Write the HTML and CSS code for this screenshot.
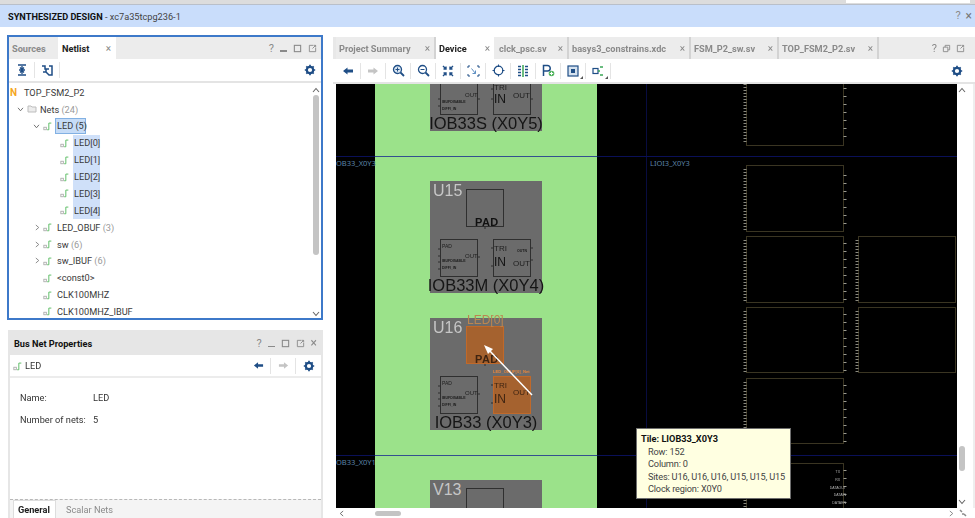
FILE: index.html
```html
<!DOCTYPE html>
<html lang="en">
<head>
<meta charset="utf-8">
<title>Synthesized Design</title>
<link rel="stylesheet" href="styles.css">
</head>
<body>
<svg class="defs" width="0" height="0" aria-hidden="true">
  <defs>
    <symbol id="net" viewBox="0 0 12 12"><rect x="1" y="7.5" width="3" height="3" fill="none" stroke="#a8a8a8"/><path d="M5 10.5H7V2.5H10" fill="none" stroke="#62bf6a" stroke-width="1.2"/></symbol>
    <symbol id="gear" viewBox="0 0 12 12"><circle cx="6" cy="6" r="3.2" fill="none" stroke="#1f4e86" stroke-width="2.2"/><path d="M6 .8V3M6 9V11.2M.8 6H3M9 6H11.2M2.3 2.3L3.9 3.9M8.1 8.1L9.7 9.7M2.3 9.7L3.9 8.1M8.1 3.9L9.7 2.3" stroke="#1f4e86" stroke-width="1.7"/></symbol>
    <symbol id="back" viewBox="0 0 12 12"><path d="M1 6L5.5 2.5V4.6H11V7.4H5.5V9.5Z" fill="#1f4e86"/></symbol>
    <symbol id="fwd" viewBox="0 0 12 12"><path d="M11 6L6.5 2.5V4.6H1V7.4H6.5V9.5Z" fill="#c4c4c4"/></symbol>
    <symbol id="up" viewBox="0 0 8 6"><path d="M1 5L4 1.5L7 5" fill="none" stroke="#666" stroke-width="1.1"/></symbol>
    <symbol id="down" viewBox="0 0 8 6"><path d="M1 1L4 4.5L7 1" fill="none" stroke="#666" stroke-width="1.1"/></symbol>
    <symbol id="right" viewBox="0 0 6 8"><path d="M1 1L4.5 4L1 7" fill="none" stroke="#808080" stroke-width="1.1"/></symbol>
    <symbol id="left" viewBox="0 0 6 8"><path d="M5 1L1.5 4L5 7" fill="none" stroke="#666" stroke-width="1.1"/></symbol>
    <symbol id="restore" viewBox="0 0 10 10"><path d="M1.5 3.5H6.5V8.5H1.5ZM3.5 3.5V1.5H8.5V6.5H6.5" fill="none" stroke="#8a8a8a"/></symbol>
    <symbol id="max" viewBox="0 0 10 10"><rect x="1.5" y="1.5" width="7" height="7" fill="none" stroke="#8a8a8a" stroke-width="1.2"/></symbol>
    <symbol id="float" viewBox="0 0 10 10"><path d="M8.5 4V8.5H1.5V1.5H6M5 5L8.5 1.5M6.5 1.5H8.5V3.5" fill="none" stroke="#8a8a8a"/></symbol>
  </defs>
</svg>

<div class="topstrip"><div class="topstrip-box"></div></div>
<header class="banner">
  <div class="banner-title"><b>SYNTHESIZED DESIGN</b> - xc7a35tcpg236-1</div>
  <div class="banner-actions"><span class="help">?</span><span class="close">×</span></div>
</header>

<main class="workspace">
  <div class="leftcol">
    <section class="netlist">
      <div class="tabs">
        <div class="tab tab-sources">Sources</div>
        <div class="tab tab-active tab-netlist">Netlist<span class="x">×</span></div>
        <div class="win-actions">
          <span class="help">?</span><span class="min"></span>
          <svg class="wi"><use href="#max"/></svg><svg class="wi"><use href="#float"/></svg>
        </div>
      </div>
      <div class="toolbar">
        <div class="tb">
          <svg width="12" height="12" viewBox="0 0 12 12"><path d="M2 1H10M2 11H10M6 2V5M4 3.5L6 5.5L8 3.5M6 10V7M4 8.5L6 6.5L8 8.5M3 6H9" fill="none" stroke="#1f4e86" stroke-width="1.3"/></svg>
        </div>
        <div class="tb">
          <svg width="12" height="12" viewBox="0 0 12 12"><path d="M1 2L4 2V5H8M8 2L11 2V11H8L5 8V5M2 8H5" fill="none" stroke="#1f4e86" stroke-width="1.5"/></svg>
        </div>
        <svg class="gear" width="12" height="12"><use href="#gear"/></svg>
      </div>
      <div class="treewrap">
        <div class="tree">
          <div class="row"><span class="n-icon">N</span><span class="lbl lbl-root">TOP_FSM2_P2</span></div>
          <div class="row l1"><svg class="chev-d"><use href="#down"/></svg>
            <svg class="ic" width="10" height="10" viewBox="0 0 10 10"><path d="M1 2H4L5 3H9V8H1Z" fill="#ececec" stroke="#bdbdbd"/></svg>
            <span class="lbl">Nets <i>(24)</i></span></div>
          <div class="row l2"><svg class="chev-d"><use href="#down"/></svg><svg class="ic"><use href="#net"/></svg><span class="lbl sel-main">LED (5)</span></div>
          <div class="row l3"><svg class="ic"><use href="#net"/></svg><span class="lbl sel">LED[0]</span></div>
          <div class="row l3"><svg class="ic"><use href="#net"/></svg><span class="lbl sel">LED[1]</span></div>
          <div class="row l3"><svg class="ic"><use href="#net"/></svg><span class="lbl sel">LED[2]</span></div>
          <div class="row l3"><svg class="ic"><use href="#net"/></svg><span class="lbl sel">LED[3]</span></div>
          <div class="row l3"><svg class="ic"><use href="#net"/></svg><span class="lbl sel">LED[4]</span></div>
          <div class="row l2"><svg class="chev-r"><use href="#right"/></svg><svg class="ic"><use href="#net"/></svg><span class="lbl">LED_OBUF <i>(3)</i></span></div>
          <div class="row l2"><svg class="chev-r"><use href="#right"/></svg><svg class="ic"><use href="#net"/></svg><span class="lbl">sw <i>(6)</i></span></div>
          <div class="row l2"><svg class="chev-r"><use href="#right"/></svg><svg class="ic"><use href="#net"/></svg><span class="lbl">sw_IBUF <i>(6)</i></span></div>
          <div class="row l2b"><svg class="ic"><use href="#net"/></svg><span class="lbl">&lt;const0&gt;</span></div>
          <div class="row l2b"><svg class="ic"><use href="#net"/></svg><span class="lbl">CLK100MHZ</span></div>
          <div class="row l2b"><svg class="ic"><use href="#net"/></svg><span class="lbl">CLK100MHZ_IBUF</span></div>
        </div>
        <div class="vscroll">
          <svg class="arrow"><use href="#up"/></svg>
          <div class="vthumb"></div>
          <svg class="arrow"><use href="#down"/></svg>
        </div>
      </div>
    </section>

    <section class="props">
      <div class="props-head"><b>Bus Net Properties</b>
        <div class="win-actions">
          <span class="help">?</span><span class="min"></span>
          <svg class="wi"><use href="#max"/></svg><svg class="wi"><use href="#float"/></svg><span class="close-sm">×</span>
        </div>
      </div>
      <div class="props-bar">
        <svg class="ic"><use href="#net"/></svg><span class="props-name">LED</span>
        <div class="props-btns">
          <div class="pb"><svg width="11" height="11"><use href="#back"/></svg></div>
          <div class="pb"><svg width="11" height="11"><use href="#fwd"/></svg></div>
          <div class="pb pb-last"><svg width="12" height="12"><use href="#gear"/></svg></div>
        </div>
      </div>
      <div class="props-body">
        <div class="prop"><span class="k">Name:</span><span>LED</span></div>
        <div class="prop"><span class="k">Number of nets:</span><span>5</span></div>
      </div>
      <div class="props-tabs"><div class="ptab ptab-on">General</div><div class="ptab">Scalar Nets</div></div>
    </section>
  </div>

  <section class="device">
    <div class="tabs tabs-r">
      <div class="tab rt rt1">Project Summary<span class="x">×</span></div>
      <div class="tab tab-active rt rt2">Device<span class="x">×</span></div>
      <div class="tab rt rt3">clck_psc.sv<span class="x">×</span></div>
      <div class="tab rt rt4">basys3_constrains.xdc<span class="x">×</span></div>
      <div class="tab rt rt5">FSM_P2_sw.sv<span class="x">×</span></div>
      <div class="tab rt rt6">TOP_FSM2_P2.sv<span class="x">×</span></div>
      <div class="win-actions win-r">
        <span class="help">?</span>
        <svg class="wi"><use href="#restore"/></svg><svg class="wi"><use href="#float"/></svg>
      </div>
    </div>
    <div class="toolbar toolbar-r">
      <div class="tb"><svg width="12" height="12"><use href="#back"/></svg></div>
      <div class="tb"><svg width="12" height="12"><use href="#fwd"/></svg></div>
      <div class="tb"><svg width="13" height="13" viewBox="0 0 13 13"><circle cx="5.5" cy="5.5" r="4" fill="#dbe7f3" stroke="#1f4e86" stroke-width="1.3"/><path d="M8.5 8.5L12 12" stroke="#1f4e86" stroke-width="1.8"/><path d="M3.5 5.5H7.5M5.5 3.5V7.5" stroke="#1f4e86"/></svg></div>
      <div class="tb"><svg width="13" height="13" viewBox="0 0 13 13"><circle cx="5.5" cy="5.5" r="4" fill="none" stroke="#1f4e86" stroke-width="1.3"/><path d="M8.5 8.5L12 12" stroke="#1f4e86" stroke-width="1.8"/><path d="M3.5 5.5H7.5" stroke="#1f4e86"/></svg></div>
      <div class="tb"><svg width="12" height="12" viewBox="0 0 12 12"><path d="M1 1L4 4M4 1.5V4H1.5M11 1L8 4M8 1.5V4H10.5M1 11L4 8M4 10.5V8H1.5M11 11L8 8M8 10.5V8H10.5" fill="none" stroke="#1f4e86" stroke-width="1.4"/></svg></div>
      <div class="tb"><svg width="13" height="12" viewBox="0 0 13 12"><path d="M1 3V1H3M10 1H12V3M1 9V11H3M10 11H12V9" fill="none" stroke="#1f4e86"/><path d="M4.500 3.500L8.500 8.500M8.500 8.500V5.500M8.500 8.500H5.500" fill="none" stroke="#5d8fc2"/></svg></div>
      <div class="tb"><svg width="13" height="13" viewBox="0 0 13 13"><circle cx="6.500" cy="6.500" r="4.300" fill="none" stroke="#1f4e86" stroke-width="1.200"/><path d="M6.500 0.500V3M6.500 10V12.500M0.500 6.500H3M10 6.500H12.500" stroke="#1f4e86"/></svg></div>
      <div class="tb"><svg width="12" height="12" viewBox="0 0 12 12"><path d="M1 1.500H4M1 4.500H4M1 7.500H4M1 10.500H4M8 1.500H11M8 4.500H11M8 7.500H11M8 10.500H11" stroke="#1f4e86" stroke-width="1.500"/><path d="M6 0V12" stroke="#3aa655" stroke-width="1.500"/></svg></div>
      <div class="tb"><svg width="14" height="13" viewBox="0 0 14 13"><path d="M2.500 12V1.500H6.500A2.500 2.500 0 0 1 6.500 7H2.500" fill="none" stroke="#1f4e86" stroke-width="1.500"/><circle cx="10.500" cy="9.500" r="2.800" fill="#4fb35c"/><path d="M8.800 9.500H12.200M10.500 7.800V11.200" stroke="#fff"/></svg></div>
      <div class="tb tb-corner"><svg width="12" height="12" viewBox="0 0 12 12"><rect x="1" y="1" width="10" height="10" fill="#d5e2ef" stroke="#1f4e86" stroke-width="1.200"/><rect x="4" y="4" width="4" height="4" fill="#1f4e86"/></svg></div>
      <div class="tb tb-corner"><svg width="13" height="12" viewBox="0 0 13 12"><rect x="1" y="3.500" width="5" height="5" fill="none" stroke="#1f4e86" stroke-width="1.200"/><path d="M8 2H11M8 10H11M6 6H8" stroke="#3aa655" stroke-width="1.500"/></svg></div>
      <svg class="gear gear-r" width="12" height="12"><use href="#gear"/></svg>
    </div>
    <div class="device-body">
      <div class="canvas">
        <svg class="canvas-svg" width="621" height="424" viewBox="336 84 621 424">
          <rect x="336" y="84" width="621" height="424" fill="#000"/>
          <rect x="375" y="84" width="222" height="424" fill="#9be28a"/>
          <path d="M646.500 84V508" stroke="#080c40"/>
          <path d="M336 156.500H957M336 455.500H957" stroke="#0a1058"/>
          <path d="M375 156.500H597M375 455.500H597" stroke="#33508f"/>
          <g class="tilelabel">
            <text x="336" y="166">OB33_X0Y3</text>
            <text x="650" y="166">LIOI3_X0Y3</text>
            <text x="336" y="465">OB33_X0Y1</text>
          </g>

          <!-- site X0Y5 -->
          <g transform="translate(430 19)">
            <rect width="112" height="112" fill="#6b6b6b"/>
            <g class="bel"><rect x="10.500" y="58.500" width="37" height="37"/><rect x="63.500" y="58.500" width="37" height="37"/></g>
            <path class="pins" d="M8 87H10M8 80H10M47 80H50M61 70H63M61 80H63M100 80H103"/>
            <text class="t4b" x="12" y="84">IBUFDISABLE</text><text class="t4b" x="12" y="91">DIFFI_IN</text>
            <text class="t6" x="35" y="78">OUT</text><text class="t8" x="64" y="71">TRI</text><text class="t12" x="64" y="84">IN</text><text class="t8" x="83" y="79">OUT</text>
            <text class="sitelabel" x="56" y="109.500">IOB33S (X0Y5)</text>
          </g>

          <!-- site X0Y4 -->
          <g transform="translate(430 181)">
            <rect width="112" height="112" fill="#6b6b6b"/>
            <text class="sitename" x="3" y="15">U15</text>
            <g class="bel"><rect x="36.500" y="8.500" width="37" height="37"/><rect x="10.500" y="58.500" width="37" height="37"/><rect x="63.500" y="58.500" width="37" height="37"/></g>
            <path class="pins" d="M55 46V48M8 68H10M8 75H10M8 81H10M8 88H10M47 76H50M61 67H63M61 85H63M100 67H103M100 79H103"/>
            <text class="padname" x="45" y="45">PAD</text>
            <text class="t5" x="12" y="67">PAD</text><text class="t4b" x="12" y="81">IBUFDISABLE</text><text class="t4b" x="12" y="88">DIFFI_IN</text>
            <text class="t6" x="35" y="77">OUT</text><text class="t8" x="64" y="70">TRI</text><text class="t12" x="64" y="85">IN</text><text class="t8" x="83" y="85">OUT</text><text class="t4b" x="87" y="71">OUTN</text>
            <text class="sitelabel" x="56" y="109.500">IOB33M (X0Y4)</text>
          </g>

          <!-- site X0Y3 -->
          <g transform="translate(430 318)">
            <rect width="112" height="112" fill="#6b6b6b"/>
            <text class="sitename" x="3" y="15">U16</text>
            <g class="bel"><rect x="10.500" y="58.500" width="37" height="37"/></g>
            <rect class="hl" x="36.500" y="8.500" width="37" height="37"/>
            <rect class="hl" x="63.500" y="58.500" width="37" height="37"/>
            <path class="pins" d="M55 46V48M8 68H10M8 75H10M8 81H10M8 88H10M47 76H50M61 67H63M61 85H63"/>
            <text class="padname padname-hl" x="45" y="45">PAD</text>
            <text class="t5" x="12" y="67">PAD</text><text class="t4b" x="12" y="81">IBUFDISABLE</text><text class="t4b" x="12" y="88">DIFFI_IN</text>
            <text class="t6" x="35" y="77">OUT</text><text class="t8 dim" x="64" y="70">TRI</text><text class="t12 dim" x="64" y="85">IN</text><text class="t8 dim" x="83" y="77">OUT</text>
            <text class="ledname" x="37" y="6">LED[0]</text>
            <text class="obufname" x="63" y="54.500">LED_OBUF[0]_Net</text>
            <text class="sitelabel" x="56" y="109.500">IOB33 (X0Y3)</text>
            <path d="M102 77L58 31" stroke="#fff" stroke-width="1.500"/>
            <path d="M54 27L63 31L58 36Z" fill="#fff"/>
          </g>

          <!-- site X0Y1 -->
          <g transform="translate(430 480)">
            <rect width="112" height="112" fill="#6b6b6b"/>
            <text class="sitename" x="3" y="15">V13</text>
            <g class="bel"><rect x="36.500" y="8.500" width="37" height="37"/></g>
          </g>

          <!-- CLB columns -->
          <g class="clb">
            <rect x="746.500" y="60.500" width="97" height="85"/>
            <rect x="746.500" y="165.500" width="97" height="66"/>
            <rect x="746.500" y="236.500" width="97" height="66"/>
            <rect x="746.500" y="307.500" width="97" height="65"/>
            <rect x="746.500" y="378.500" width="97" height="65"/>
            <rect x="746.500" y="463.500" width="97" height="65"/>
            <rect x="858.500" y="236.500" width="97" height="66"/>
            <rect x="858.500" y="307.500" width="97" height="65"/>
          </g>
          <path class="ticks-l" d="M745 84V144M745 169V230M745 240V301M745 311V372M745 382V442M745 467V508M857 240V301M857 311V372"/>
          <path class="ticks-r" d="M845 88V144M845 175V230M845 243V301M845 314V372M845 385V442M845 470V508"/>
          <g class="tinytext"><text x="840" y="473" text-anchor="end">TX</text><text x="840" y="481" text-anchor="end">RX</text><text x="846" y="489" text-anchor="end">DATAOUT</text><text x="846" y="496" text-anchor="end">DATAIN</text><text x="846" y="504" text-anchor="end">DATAEN</text></g>
        </svg>
        <div class="tooltip">
          <div class="tip-title">Tile: LIOB33_X0Y3</div>
          <div class="tip-row">Row: 152</div>
          <div class="tip-row">Column: 0</div>
          <div class="tip-row">Sites: U16, U16, U16, U15, U15, U15</div>
          <div class="tip-row">Clock region: X0Y0</div>
        </div>
      </div>
      <div class="canvas-vs">
        <svg class="arrow"><use href="#up"/></svg>
        <div class="canvas-vthumb"></div>
        <svg class="arrow"><use href="#down"/></svg>
      </div>
    </div>
    <div class="canvas-hs">
      <svg class="harrow"><use href="#left"/></svg>
      <div class="canvas-hthumb"></div>
      <svg class="harrow harrow-r"><use href="#right"/></svg>
      <svg class="grip" width="8" height="8" viewBox="0 0 8 8"><path d="M1 1L3 3M5 5L7 7M3 5H5" stroke="#8a8a8a" stroke-width="1.500"/></svg>
    </div>
  </section>
</main>
</body>
</html>
```

FILE: styles.css
```css
* { box-sizing: border-box; }
html, body { margin: 0; padding: 0; }
body {
  width: 975px;
  height: 518px;
  overflow: hidden;
  background: #fff;
  font-family: Roboto, "Noto Sans", sans-serif;
  font-size: 9.2px;
  color: #333;
  display: flex;
  flex-direction: column;
  filter: blur(0.35px);
}
.defs { position: absolute; }

.topstrip { height: 5px; background: #dcdcdc; border-bottom: 1px solid #b9bfc9; display: flex; justify-content: flex-end; padding-right: 5px; }
.topstrip-box { width: 124px; height: 3px; background: #fff; }
.banner { height: 22px; background: #c9ddfb; display: flex; align-items: center; justify-content: space-between; padding: 0 3px 0 8px; color: #444; }
.banner b { color: #111; font-weight: 700; }
.banner-actions { display: flex; gap: 5px; color: #777; font-size: 12px; }

.workspace { flex: 1; min-height: 0; display: flex; padding: 8px 0 0 7px; gap: 10px; }
.leftcol { width: 316px; display: flex; flex-direction: column; gap: 10px; }

.netlist { height: 285px; border: 2px solid #3d79c9; display: flex; flex-direction: column; background: #fff; }
.tabs { height: 22px; display: flex; background: #ececec; align-items: stretch; flex-shrink: 0; }
.tab { display: flex; align-items: center; color: #8a8a8a; font-weight: 700; white-space: nowrap; }
.tab-active { background: #fff; color: #222; }
.tab-sources { width: 49px; padding-left: 3px; }
.tab-netlist { width: 58px; padding-left: 4px; }
.x { font-weight: 400; color: #888; font-size: 10px; }
.tab-netlist .x { margin-left: auto; margin-right: 5px; }
.win-actions { margin-left: auto; display: flex; align-items: center; gap: 6px; padding-right: 4px; color: #888; }
.help { font-size: 11px; color: #8a8a8a; }
.min { width: 7px; height: 1.500px; background: #8a8a8a; margin-top: 6px; }
.wi { width: 9px; height: 9px; }

.toolbar { height: 24px; display: flex; align-items: center; background: #fff; border-bottom: 2px solid #e4e4e4; padding-left: 1px; flex-shrink: 0; }
.tb { width: 25px; height: 16px; display: flex; align-items: center; justify-content: center; border-right: 1px solid #e4e4e4; position: relative; }
.tb-corner::after { content: ""; position: absolute; right: 2px; bottom: 0; border-left: 3px solid transparent; border-bottom: 3px solid #555; }
.gear { margin-left: auto; margin-right: 5px; }

.treewrap { flex: 1; min-height: 0; display: flex; }
.tree { flex: 1; padding-top: 1px; overflow: hidden; }
.row { height: 16.850px; display: flex; align-items: center; padding-left: 1px; color: #3a3a3a; white-space: nowrap; }
.row i { font-style: normal; color: #9a9a9a; }
.n-icon { color: #f5a623; font-weight: 700; font-size: 10px; width: 13px; margin-right: 1px; }
.ic { width: 10px; height: 10px; flex-shrink: 0; }
.chev-d { width: 7px; height: 5px; margin-right: 3px; }
.chev-r { width: 5px; height: 7px; margin: 0 3px 0 2px; }
.l1 { padding-left: 8px; }
.l1 .lbl { margin-left: 3px; }
.l2 { padding-left: 24px; }
.l2b { padding-left: 34px; }
.l2 .ic, .l2b .ic { margin-right: 4px; }
.l3 { padding-left: 51px; }
.l3 .ic { margin-right: 3px; }
.sel-main { background: #c6dcf7; border: 1px solid #82b1e3; padding: 0 1px; height: 16px; line-height: 14px; margin-left: -2px; width: 31px; }
.sel { background: #cfe0f9; height: 100%; display: flex; align-items: center; padding: 0 1px; width: 27px; }
.lbl { white-space: nowrap; }

.vscroll { width: 11px; display: flex; flex-direction: column; align-items: center; padding-top: 4px; background: #fff; }
.arrow { width: 8px; height: 6px; flex-shrink: 0; }
.vthumb { width: 6px; height: 160px; margin-top: 2px; background: #c4c4c4; border-radius: 3px; }
.vscroll .arrow:last-child { margin-top: auto; margin-bottom: 1px; }

.props { flex: 1; min-height: 0; display: flex; flex-direction: column; border: solid #e6e6e6; border-width: 0 2px; margin-left: 1px; }
.props-head { height: 25px; flex-shrink: 0; background: #e6e6e6; display: flex; align-items: center; padding: 2px 0 0 4px; color: #111; }
.close-sm { font-size: 12px; line-height: 9px; color: #8a8a8a; }
.props-bar { height: 23px; flex-shrink: 0; display: flex; align-items: center; padding-left: 3px; border-bottom: 2px solid #ececec; }
.props-name { margin-left: 2px; }
.props-btns { margin-left: auto; display: flex; }
.pb { width: 25px; height: 16px; display: flex; align-items: center; justify-content: center; border-right: 1px solid #e4e4e4; }
.pb-last { border-right: 0; }
.props-body { flex: 1; padding: 8px 0 0 10px; }
.prop { display: flex; height: 22px; align-items: center; }
.k { width: 73px; }
.props-tabs { height: 19px; flex-shrink: 0; background: #f4f4f4; border-top: 1px dashed #b8b8b8; display: flex; padding-left: 3px; gap: 9px; color: #8a8a8a; }
.ptab { display: flex; align-items: center; padding: 0 1px; }
.ptab-on { background: #fff; border: 1px solid #ddd; border-bottom: 0; padding: 0 4px; color: #222; font-weight: 700; width: 43px; }

.device { flex: 1; min-width: 0; display: flex; flex-direction: column; padding-top: 2px; background: #e8e8e8; background-clip: content-box; }
.tabs-r { border-left: 3px solid #e8e8e8; }
.rt { padding-left: 3px; border-right: 2px solid #d3d3d3; font-weight: 700; }
.rt1 { width: 100px; }
.rt2 { width: 58px; border-right: 0; }
.rt3 { width: 75px; padding-left: 5px; }
.rt4 { width: 122px; }
.rt5 { width: 88px; }
.rt6 { width: 100px; }
.rt .x { margin-left: auto; margin-right: 4px; }
.win-r { padding-right: 10px; gap: 5px; }
.toolbar-r { height: 25px; padding-left: 3px; }
.gear-r { margin-right: 12px; }

.device-body { height: 424px; display: flex; padding-left: 3px; background: #fff; }
.canvas { position: relative; width: 621px; height: 424px; background: #000; }
.canvas-svg { display: block; }
.canvas-vs { flex: 1; display: flex; flex-direction: column; align-items: center; padding: 3px 7px 3px 0; background: #fff; border-right: 2px solid #eee; }
.canvas-vthumb { width: 6px; height: 25px; background: #c4c4c4; border-radius: 3px; margin-top: auto; margin-bottom: 28px; }
.canvas-hs { flex: 1; min-height: 0; display: flex; align-items: center; padding-left: 6px; background: #fff; }
.harrow { width: 5px; height: 7px; flex-shrink: 0; }
.canvas-hthumb { width: 26px; height: 5px; border-radius: 3px; background: #c4c4c4; margin-left: 31px; }
.harrow-r { margin-left: auto; }
.grip { margin: 0 8px 0 5px; }

.bel rect { fill: none; stroke: #2f2f2f; }
.pins { stroke: #2f2f2f; fill: none; }
.hl { fill: #a5622f; stroke: #c0692a; }
.sitelabel { font: 16.500px "Liberation Sans", sans-serif; fill: #151515; text-anchor: middle; }
.sitename { font: 16px "Liberation Sans", sans-serif; fill: #c6c6c6; }
.padname { font: 700 11px "Liberation Sans", sans-serif; fill: #111; letter-spacing: .4px; }
.padname-hl { fill: #3f2411; }
.ledname { font: 12px "Liberation Sans", sans-serif; fill: #bb8650; }
.obufname { font: 700 4.200px "Liberation Sans", sans-serif; fill: #e8873e; }
.t4b { font: 700 3.500px "Liberation Sans", sans-serif; fill: #1c1c1c; }
.t5 { font: 5px "Liberation Sans", sans-serif; fill: #1c1c1c; }
.t6 { font: 6px "Liberation Sans", sans-serif; fill: #202020; }
.t8 { font: 8px "Liberation Sans", sans-serif; fill: #202020; }
.t12 { font: 12px "Liberation Sans", sans-serif; fill: #111; }
.dim { fill: #3e2412; }
.tilelabel text { font: 7.500px "Noto Sans", sans-serif; fill: #5c84a8; }
.clb rect { fill: none; stroke: #3a3522; }
.ticks-l { stroke: #8a8a80; stroke-width: 3; stroke-dasharray: 1 2; fill: none; }
.ticks-r { stroke: #9a9a90; stroke-width: 3; stroke-dasharray: 1 7; fill: none; }
.tinytext text { font: 3.500px "Liberation Sans", sans-serif; fill: #b0b0b0; }

.tooltip { position: absolute; left: 300px; top: 344px; width: 155px; height: 71px; background: #ffffe1; border: 1px solid #6e6e6e; padding: 4px 4px 0; color: #444; line-height: 12.600px; }
.tip-title { font-weight: 700; color: #111; }
.tip-row { padding-left: 7px; white-space: nowrap; letter-spacing: -0.17px; }
```
